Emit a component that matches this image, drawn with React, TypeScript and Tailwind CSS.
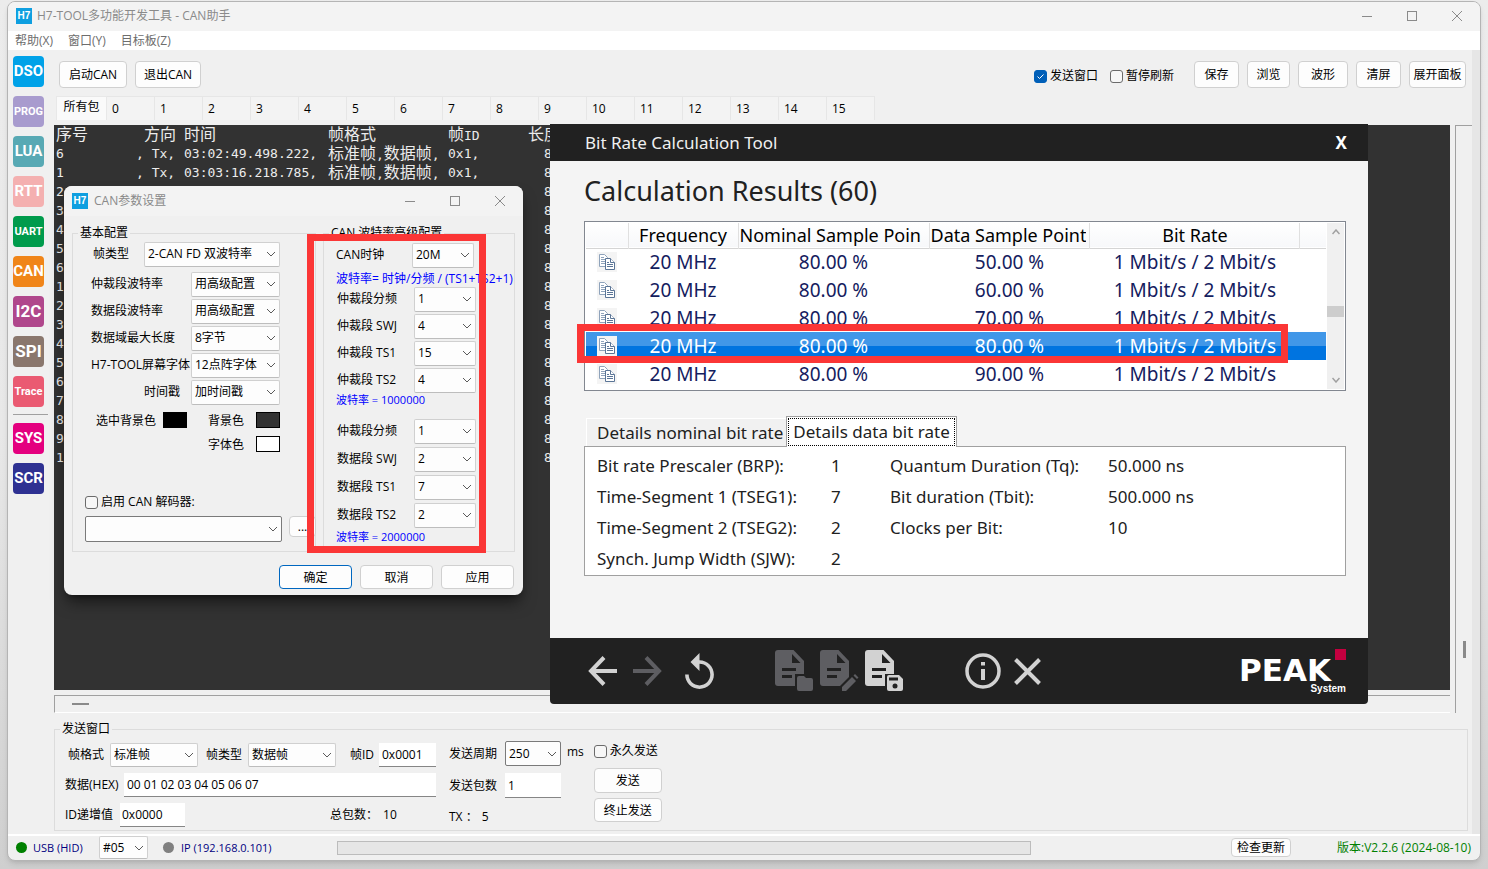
import {ReactNode, useState} from "react";

type SelectProps = {
    id: string
    value: string
    className?: string
    label?: string
}

type LogRow = {
    no: string
    time?: string
}

const modules = [
    {name: "DSO", className: "bg-[#00a2e8] text-[15px]"},
    {name: "PROG", className: "bg-[#a89bce] text-[11px]"},
    {name: "LUA", className: "bg-[#58a9b4] text-[15px]"},
    {name: "RTT", className: "bg-[#f4b0b0] text-[15px]"},
    {name: "UART", className: "bg-[#009b4c] text-[11px]"},
    {name: "CAN", className: "bg-[#f08519] text-[15px]"},
    {name: "I2C", className: "bg-[#b0478c] text-[17px]"},
    {name: "SPI", className: "bg-[#8a776d] text-[17px]"},
    {name: "Trace", className: "bg-[#ea5a72] text-[11px]"},
];

const systemModules = [
    {name: "SYS", className: "bg-[#e4007f] text-[15px]"},
    {name: "SCR", className: "bg-[#2e3192] text-[15px]"},
];

const channels = ["0", "1", "2", "3", "4", "5", "6", "7", "8", "9", "10", "11", "12", "13", "14", "15"];

const logRows: LogRow[] = [
    {no: "6", time: "03:02:49.498.222,"},
    {no: "1", time: "03:03:16.218.785,"},
    {no: "2"}, {no: "3"}, {no: "4"}, {no: "5"}, {no: "6"},
    {no: "1"}, {no: "2"}, {no: "3"}, {no: "4"}, {no: "5"},
    {no: "6"}, {no: "7"}, {no: "8"}, {no: "9"}, {no: "1"},
];

const results = ["50.00 %", "60.00 %", "70.00 %", "80.00 %", "90.00 %"];

const details = [
    ["Bit rate Prescaler (BRP):", "1", "Quantum Duration (Tq):", "50.000 ns"],
    ["Time-Segment 1 (TSEG1):", "7", "Bit duration (Tbit):", "500.000 ns"],
    ["Time-Segment 2 (TSEG2):", "2", "Clocks per Bit:", "10"],
    ["Synch. Jump Width (SJW):", "2", "", ""],
];

const basicFields = [
    {id: "arb-rate", label: "仲裁段波特率", value: "用高级配置"},
    {id: "data-rate", label: "数据段波特率", value: "用高级配置"},
    {id: "data-len", label: "数据域最大长度", value: "8字节"},
    {id: "font", label: "H7-TOOL屏幕字体", value: "12点阵字体"},
    {id: "stamp", label: "时间戳", value: "加时间戳"},
];

const arbFields = [
    {id: "arb-div", label: "仲裁段分频", value: "1"},
    {id: "arb-swj", label: "仲裁段 SWJ", value: "4"},
    {id: "arb-ts1", label: "仲裁段 TS1", value: "15"},
    {id: "arb-ts2", label: "仲裁段 TS2", value: "4"},
];

const dataFields = [
    {id: "data-div", label: "仲裁段分频", value: "1"},
    {id: "data-swj", label: "数据段 SWJ", value: "2"},
    {id: "data-ts1", label: "数据段 TS1", value: "7"},
    {id: "data-ts2", label: "数据段 TS2", value: "2"},
];

const Chevron = () => (
    <svg className="pointer-events-none absolute right-1 top-1/2 -mt-[3px] h-[6px] w-[10px]" viewBox="0 0 10 6" fill="none" stroke="#5a5a5a">
        <path d="M1 1l4 4 4-4"/>
    </svg>
);

const Select = ({id, value, className, label}: SelectProps) => (
    <span className={`relative block shrink-0 ${className ?? ""}`}>
        <select id={id} aria-label={label}
                className="block h-full w-full appearance-none rounded-xs border border-[#d0d0d0] border-b-[#bdbdbd] bg-[#fdfdfd] pl-[3px] text-black">
            <option>{value}</option>
        </select>
        <Chevron/>
    </span>
);

const Button = ({className, children}: { className: string, children: ReactNode }) => (
    <button className={`shrink-0 whitespace-nowrap rounded border bg-[#fdfdfd] pt-px text-center ${className}`}>
        {children}
    </button>
);

const CheckBox = ({label, initial}: { label: string, initial?: boolean }) => {
    const [checked, setChecked] = useState(!!initial);

    return (
        <label className="relative flex items-center gap-[3px] whitespace-nowrap">
            <input type="checkbox" checked={checked} onChange={() => setChecked(!checked)}
                   className="h-[13px] w-[13px] appearance-none rounded-[3px] border border-[#6b6b6b] bg-[#f7f7f7] checked:border-[#005fb8] checked:bg-[#005fb8]"/>
            {checked &&
                <svg className="pointer-events-none absolute left-[3px] h-[7px] w-[7px]" viewBox="0 0 7 7" fill="none" stroke="white">
                    <path d="M0.5 3.5l2 2 4-4"/>
                </svg>
            }
            {label}
        </label>
    );
};

const Logo = () => (
    <span className="flex h-4 w-4 shrink-0 items-center justify-center bg-[#0f9fe0] font-['Liberation_Sans'] text-[10px] font-bold leading-none text-white">
        H7
    </span>
);

const WindowButtons = ({className}: { className: string }) => (
    <div className={`ml-auto flex items-center gap-[23px] text-[#8a8a8a] ${className}`}>
        <button aria-label="minimize" className="flex h-[22px] w-[22px] items-center justify-center">
            <svg className="h-[10px] w-[10px]" viewBox="0 0 10 10" fill="none" stroke="currentColor"><path d="M0 5.5h10"/></svg>
        </button>
        <button aria-label="maximize" className="flex h-[22px] w-[22px] items-center justify-center">
            <svg className="h-[10px] w-[10px]" viewBox="0 0 10 10" fill="none" stroke="currentColor"><rect x="0.5" y="0.5" width="9" height="9"/></svg>
        </button>
        <button aria-label="close" className="flex h-[22px] w-[22px] items-center justify-center">
            <svg className="h-[10px] w-[10px]" viewBox="0 0 10 10" fill="none" stroke="currentColor"><path d="M0 0l10 10M10 0L0 10"/></svg>
        </button>
    </div>
);

const ModuleButton = ({name, className}: { name: string, className: string }) => (
    <button className={`flex h-[31px] w-[31px] items-center justify-center rounded font-['Roboto',sans-serif] font-bold leading-none text-white ${className}`}>
        {name}
    </button>
);

const Sidebar = () => (
    <nav className="w-[46px] shrink-0 pl-[5px] pt-[6px]">
        <div className="flex flex-col gap-[9px]">
            {modules.map((m) => <ModuleButton key={m.name} {...m}/>)}
        </div>
        <div className="mb-2 mr-[6px] mt-[7px] h-px bg-[#a0a0a0]"/>
        <div className="flex flex-col gap-[9px]">
            {systemModules.map((m) => <ModuleButton key={m.name} {...m}/>)}
        </div>
    </nav>
);

const Toolbar = () => (
    <div className="flex h-[46px] items-center gap-2 pl-[5px] pr-[6px] pt-[2px]">
        <Button className="h-[27px] w-[68px] border-[#d0d0d0]">启动CAN</Button>
        <Button className="h-[27px] w-[66px] border-[#d0d0d0]">退出CAN</Button>
        <div className="ml-auto mr-3 flex gap-3 pt-1">
            <CheckBox label="发送窗口" initial/>
            <CheckBox label="暂停刷新"/>
        </div>
        <Button className="h-[27px] w-[45px] border-[#d0d0d0]">保存</Button>
        <Button className="h-[27px] w-[43px] border-[#d0d0d0]">浏览</Button>
        <Button className="h-[27px] w-[50px] border-[#d0d0d0]">波形</Button>
        <Button className="h-[27px] w-[45px] border-[#d0d0d0]">清屏</Button>
        <Button className="h-[27px] w-[57px] border-[#d0d0d0]">展开面板</Button>
    </div>
);

const LogTable = () => (
    <table className="w-[820px] table-fixed border-collapse text-left font-['DejaVu_Sans_Mono','Noto_Sans_CJK_SC',monospace] text-[13px] leading-[19px] text-[#ececec]">
        <colgroup>
            <col className="w-[80px]"/>
            <col className="w-[48px]"/>
            <col className="w-[144px]"/>
            <col className="w-[120px]"/>
            <col className="w-[80px]"/>
            <col/>
        </colgroup>
        <thead>
        <tr className="h-[19px] text-[16px]">
            <th className="p-0 font-normal">序号</th>
            <th className="p-0 pl-2 font-normal">方向</th>
            <th className="p-0 font-normal">时间</th>
            <th className="p-0 font-normal">帧格式</th>
            <th className="p-0 font-normal">帧<span className="text-[13px] leading-none">ID</span></th>
            <th className="p-0 font-normal">长度</th>
        </tr>
        </thead>
        <tbody>
        {logRows.map((row, index) => (
            <tr className="h-[19px]" key={index}>
                <td className="p-0">{row.no}</td>
                <td className="whitespace-pre p-0">{row.time && ", Tx,"}</td>
                <td className="p-0">{row.time}</td>
                <td className="whitespace-nowrap p-0 text-[16px]">
                    {row.time &&
                        <>标准帧<span className="text-[13px] leading-none">,</span>数据帧<span className="text-[13px] leading-none">,</span></>
                    }
                </td>
                <td className="p-0">{row.time && "0x1,"}</td>
                <td className="p-0 pl-4">8</td>
            </tr>
        ))}
        </tbody>
    </table>
);

const SendPanel = () => (
    <fieldset className="mr-1 flex h-[110px] border border-[#dcdcdc] pl-2">
        <legend className="-ml-[3px] px-[2px] leading-4">发送窗口</legend>
        <div className="flex w-[373px] flex-col gap-[6px] pt-[6px]">
            <div className="flex h-6 items-center">
                <label htmlFor="frame-format" className="w-[47px] pl-[5px]">帧格式</label>
                <Select id="frame-format" value="标准帧" className="h-6 w-[88px]"/>
                <label htmlFor="frame-type" className="w-[50px] pl-2">帧类型</label>
                <Select id="frame-type" value="数据帧" className="h-6 w-[88px]"/>
                <label htmlFor="frame-id" className="ml-auto pr-[5px]">帧ID</label>
                <input id="frame-id" defaultValue="0x0001" className="h-6 w-[57px] border-b border-[#868686] bg-white pl-[3px]"/>
            </div>
            <div className="flex h-6 items-center">
                <label htmlFor="hex" className="w-[61px] whitespace-nowrap pl-[2px]">数据(HEX)</label>
                <input id="hex" defaultValue="00 01 02 03 04 05 06 07" className="h-6 min-w-0 flex-1 border-b border-[#868686] bg-white pl-[3px]"/>
            </div>
            <div className="flex h-6 items-center">
                <label htmlFor="id-inc" className="w-[57px] whitespace-nowrap pl-[2px]">ID递增值</label>
                <input id="id-inc" defaultValue="0x0000" className="h-6 w-[65px] border-b border-[#868686] bg-white pl-[2px]"/>
                <span className="ml-[145px]">总包数：</span>
                <span className="pl-[5px]">10</span>
            </div>
        </div>
        <div className="ml-[13px] flex w-[112px] flex-col gap-[7px] pt-[4px]">
            <div className="flex h-[25px] items-center justify-between">
                <label htmlFor="period">发送周期</label>
                <Select id="period" value="250" className="h-[25px] w-[56px] [&>select]:border-[#7a7a7a]"/>
            </div>
            <div className="flex h-[25px] items-center justify-between">
                <label htmlFor="packets">发送包数</label>
                <input id="packets" defaultValue="1" className="h-[25px] w-[56px] border-b border-[#868686] bg-white pl-[3px]"/>
            </div>
            <div className="flex h-6 items-center gap-1">
                <span>TX ：</span>
                <span>5</span>
            </div>
        </div>
        <span className="ml-[6px] pt-[7px]">ms</span>
        <div className="ml-[10px] flex flex-col pt-[6px]">
            <CheckBox label="永久发送"/>
            <Button className="mt-[9px] h-[25px] w-[68px] border-[#d0d0d0]">发送</Button>
            <Button className="mt-[5px] h-6 w-[68px] border-[#d0d0d0]">终止发送</Button>
        </div>
    </fieldset>
);

const StatusBar = () => (
    <footer className="flex h-[26px] items-center border-t-2 border-white pb-px pr-[9px]">
        <span className="ml-2 h-[11px] w-[11px] rounded-full bg-[#008000]"/>
        <span className="ml-[6px] w-[66px] whitespace-nowrap text-[11px] text-[#000080]">USB (HID)</span>
        <Select id="device" label="device" value="#05" className="h-[23px] w-[49px]"/>
        <span className="ml-[15px] h-[11px] w-[11px] rounded-full bg-[#808080]"/>
        <span className="ml-[7px] w-[153px] whitespace-nowrap text-[11px] text-[#000080]">IP (192.168.0.101)</span>
        <div className="ml-[3px] h-[14px] flex-1 border border-[#bcbcbc] bg-[#e6e6e6]"/>
        <Button className="ml-[200px] h-[19px] w-[60px] border-[#d0d0d0] leading-4">检查更新</Button>
        <span className="w-[180px] whitespace-nowrap text-right text-[#008000]">版本:V2.2.6 (2024-08-10)</span>
    </footer>
);

const TimingRows = ({fields, className}: { fields: typeof arbFields, className: string }) => (
    <div className={`flex flex-col ${className}`}>
        {fields.map((f) => (
            <div className="flex h-6 items-center" key={f.id}>
                <label htmlFor={f.id} className="w-[78px] whitespace-nowrap pl-px">{f.label}</label>
                <Select id={f.id} value={f.value} className="h-[25px] w-[62px]"/>
            </div>
        ))}
    </div>
);

const CanDialog = () => (
    <section className="absolute left-[64px] top-[186px] w-[459px] rounded-lg bg-[#f0f0f0] pb-[6px] shadow-lg shadow-black/50">
        <header className="flex h-[30px] items-center rounded-t-lg bg-[#f3f3f3] pl-2">
            <Logo/>
            <h2 className="pl-[6px] text-[#8a8a8a]">CAN参数设置</h2>
            <WindowButtons className="pr-3"/>
        </header>
        <div className="flex gap-[7px] px-2 pt-[9px]">
            <fieldset className="h-[327px] w-[244px] min-w-0 border border-[#dcdcdc]">
                <legend className="ml-[5px] px-[2px] leading-4">基本配置</legend>
                <div className="mt-px flex h-6 items-center pl-5">
                    <label htmlFor="can-type" className="w-[51px]">帧类型</label>
                    <Select id="can-type" value="2-CAN FD 双波特率" className="h-[25px] w-[136px]"/>
                </div>
                <div className="mt-[6px] flex w-[207px] flex-col gap-[3px]">
                    {basicFields.map((f) => (
                        <div className="flex h-6 items-center" key={f.id}>
                            <label htmlFor={f.id} className={`w-[118px] overflow-hidden whitespace-nowrap ${f.id === "stamp" ? "pl-[71px]" : "pl-[18px]"}`}>
                                {f.label}
                            </label>
                            <Select id={f.id} value={f.value} className="h-[25px] w-[89px]"/>
                        </div>
                    ))}
                </div>
                <div className="mt-2 grid w-[207px] grid-cols-[67px_45px_48px_24px] gap-y-[6px] pl-[23px]">
                    <span className="leading-[18px]">选中背景色</span>
                    <span className="h-4 w-6 border border-black bg-black"/>
                    <span className="leading-[18px]">背景色</span>
                    <span className="h-4 w-6 border border-black bg-[#323232]"/>
                    <span className="col-start-3 leading-[18px]">字体色</span>
                    <span className="h-4 w-6 border border-black bg-white"/>
                </div>
                <div className="ml-3 mt-[40px]">
                    <CheckBox label="启用 CAN 解码器:"/>
                </div>
                <div className="ml-3 mt-[6px] flex gap-[7px]">
                    <Select id="decoder" label="decoder" value="" className="h-[26px] w-[197px] [&>select]:border-[#7a7a7a]"/>
                    <Button className="h-[21px] w-[27px] border-[#d0d0d0] leading-4">...</Button>
                </div>
            </fieldset>
            <fieldset className="h-[327px] min-w-0 flex-1 border border-[#dcdcdc] pl-3">
                <legend className="-ml-[7px] px-[2px] leading-4">CAN 波特率高级配置</legend>
                <div className="mt-[2px] flex h-6 items-center">
                    <label htmlFor="clock" className="w-[76px]">CAN时钟</label>
                    <Select id="clock" value="20M" className="h-[25px] w-[62px]"/>
                </div>
                <p className="mt-[4px] whitespace-nowrap leading-4 text-[#0000ff]">波特率= 时钟/分频 / (TS1+TS2+1)</p>
                <TimingRows fields={arbFields} className="gap-[3px]"/>
                <p className="mb-[11px] text-[11px] leading-4 text-[#0000ff]">波特率 = 1000000</p>
                <TimingRows fields={dataFields} className="gap-1"/>
                <p className="mt-[2px] text-[11px] leading-4 text-[#0000ff]">波特率 = 2000000</p>
            </fieldset>
        </div>
        <div className="mt-[13px] flex justify-end gap-2 pr-[9px]">
            <Button className="h-6 w-[73px] border-[#0067c0]">确定</Button>
            <Button className="h-6 w-[73px] border-[#d0d0d0]">取消</Button>
            <Button className="h-6 w-[73px] border-[#d0d0d0]">应用</Button>
        </div>
    </section>
);

const CopyIcon = () => (
    <svg className="mx-auto block h-5 w-5 bg-[#f4f4f4]" viewBox="0 0 20 20" fill="white" stroke="#8fa3bb">
        <path d="M2.5 2.5h5l3 3v9h-8z"/>
        <path d="M4 5.5h3M4 7.5h4M4 9.5h4M4 11.5h4"/>
        <path d="M8.5 6.5h5l4 4v7h-9z" stroke="#5b7596"/>
        <path d="M13.5 6.5v4h4M10 10.5h2M10 12.5h6M10 14.5h6" stroke="#5b7596"/>
    </svg>
);

const DocIcon = ({children}: { children: ReactNode }) => (
    <svg className="h-[42px] w-[39px]" viewBox="0 0 39 42" fill="currentColor">
        <path d="M3 0h15.500l10.500 11v22a3 3 0 0 1-3 3H3a3 3 0 0 1-3-3V3a3 3 0 0 1 3-3z"/>
        <path d="M17 4v9h8.500zM7 18h14v3H7zM7 25h10v3H7z" fill="#212121"/>
        {children}
    </svg>
);

const PeakWindow = () => (
    <section className="absolute left-[550px] top-[124px] w-[818px] rounded-sm bg-[#f4f4f4] font-['Noto_Sans',sans-serif] text-[17px] text-[#212121]">
        <header className="flex h-[37px] items-center justify-between bg-[#212121] pl-[35px] pr-[21px] pt-px text-[#f0f0f0]">
            <h2>Bit Rate Calculation Tool</h2>
            <button className="font-bold text-white">X</button>
        </header>
        <div className="pb-[62px] pl-[34px] pr-[22px] pt-3">
            <h1 className="h-[48px] text-[27px] leading-9">Calculation Results (60)</h1>
            <div className="flex h-[170px] border border-[#828790] bg-white p-px">
                <table className="h-fit min-w-0 flex-1 table-fixed border-collapse text-center text-[18px] leading-[24px]">
                    <colgroup>
                        <col className="w-[42px]"/>
                        <col className="w-[110px]"/>
                        <col className="w-[191px]"/>
                        <col className="w-[160px]"/>
                        <col className="w-[210px]"/>
                        <col/>
                    </colgroup>
                    <thead>
                    <tr className="h-[25px] border-b border-[#d5d5d5] bg-linear-to-b from-white to-[#f7f8fa] text-black">
                        <th className="border-r border-[#e0e0e0] p-0"/>
                        <th className="border-r border-[#e0e0e0] p-0 font-normal">Frequency</th>
                        <th className="border-r border-[#e0e0e0] p-0 px-px text-left font-normal">
                            <div className="overflow-hidden whitespace-nowrap">Nominal Sample Poin</div>
                        </th>
                        <th className="border-r border-[#e0e0e0] p-0 px-px text-left font-normal">
                            <div className="mr-[2px] overflow-hidden whitespace-nowrap">Data Sample Point</div>
                        </th>
                        <th className="border-r border-[#e0e0e0] p-0 font-normal">Bit Rate</th>
                        <th className="p-0"/>
                    </tr>
                    </thead>
                    <tbody className="text-[19px]">
                    {results.map((point, index) => (
                        <tr key={point}
                            className={index === 3 ? "h-7 bg-linear-to-b from-[#4197e8] from-50% to-[#0074e0] to-50% text-white" : "h-7 text-[#14205e]"}>
                            <td className="p-0"><CopyIcon/></td>
                            <td className="p-0">20 MHz</td>
                            <td className="p-0">80.00 %</td>
                            <td className="p-0">{point}</td>
                            <td className="whitespace-nowrap p-0">1 Mbit/s / 2 Mbit/s</td>
                            <td className="p-0"/>
                        </tr>
                    ))}
                    </tbody>
                </table>
                <div className="ml-px flex w-[17px] shrink-0 flex-col items-center bg-[#f0f0f0] py-[6px]">
                    <svg className="h-[6px] w-2" viewBox="0 0 8 6" fill="none" stroke="#a0a0a0" strokeWidth="1.500"><path d="M0.500 5L4 1l3.500 4"/></svg>
                    <div className="mt-[71px] h-[11px] w-full bg-[#cdcdcd]"/>
                    <svg className="mt-auto h-[6px] w-2" viewBox="0 0 8 6" fill="none" stroke="#a0a0a0" strokeWidth="1.500"><path d="M0.500 1L4 5l3.500-4"/></svg>
                </div>
            </div>
            <div className="mt-[25px] flex items-end pl-[2px]">
                <button className="h-[28px] w-[200px] whitespace-nowrap border-l border-t border-white bg-[#f1f1f1] pl-[10px] text-left leading-[26px]">
                    Details nominal bit rate
                </button>
                <button className="relative -mb-px h-[31px] w-[171px] border border-b-0 border-[#a0a0a0] bg-white p-px">
                    <span className="block h-full whitespace-nowrap border border-dotted border-black leading-[26px]">Details data bit rate</span>
                </button>
            </div>
            <dl className="grid h-[130px] grid-cols-[234px_59px_218px_1fr] grid-rows-4 border border-[#a0a0a0] bg-white pb-px pl-3 pt-[3px] leading-[31px]">
                {details.flat().map((text, index) => (
                    index % 2 === 0 ? <dt key={index}>{text}</dt> : <dd key={index}>{text}</dd>
                ))}
            </dl>
        </div>
        <footer className="flex h-[66px] items-center rounded-b-sm bg-[#212121] pl-[38px] pr-[22px] text-[#d2d2d2]">
            <button aria-label="back">
                <svg className="h-[30px] w-[29px]" viewBox="0 0 29 30" fill="none" stroke="currentColor" strokeWidth="4"><path d="M29 15H3M16 1.500L3 15l13 13.500"/></svg>
            </button>
            <button aria-label="forward" className="ml-4 text-[#5e5e62]">
                <svg className="h-[30px] w-[29px]" viewBox="0 0 29 30" fill="none" stroke="currentColor" strokeWidth="4"><path d="M0 15h26M13 1.500L26 15 13 28.500"/></svg>
            </button>
            <button aria-label="reset" className="ml-[23px]">
                <svg className="h-9 w-[29px]" viewBox="4 1 16 20" fill="currentColor">
                    <path d="M12 5V1L7 6l5 5V7c3.310 0 6 2.690 6 6s-2.690 6-6 6-6-2.690-6-6H4c0 4.420 3.580 8 8 8s8-3.580 8-8-3.580-8-8-8z"/>
                </svg>
            </button>
            <button aria-label="open" className="ml-[61px] text-[#5e5e62]">
                <DocIcon>
                    <path d="M20 24h19v18H20z" fill="#212121"/>
                    <path d="M24 26h5l2 2h5a2 2 0 0 1 2 2v9a2 2 0 0 1-2 2H24a2 2 0 0 1-2-2V28a2 2 0 0 1 2-2z"/>
                </DocIcon>
            </button>
            <button aria-label="edit" className="ml-[6px] text-[#5e5e62]">
                <DocIcon>
                    <path d="M20 36L34 22l5 5v15H20z" fill="#212121"/>
                    <path d="M22 37l10-10 4 4-10 10h-4zM33.500 25.500l1.500-1.500 3.500 3.500-1.500 1.500z"/>
                </DocIcon>
            </button>
            <button aria-label="save" className="ml-[6px]">
                <DocIcon>
                    <path d="M20 24h19v18H20z" fill="#212121"/>
                    <path d="M24 25h10l4 4v10a2 2 0 0 1-2 2H24a2 2 0 0 1-2-2V27a2 2 0 0 1 2-2z"/>
                    <path d="M24 27.500h9v3h-9z" fill="#212121"/>
                    <circle cx="30" cy="36" r="2.500" fill="#212121"/>
                </DocIcon>
            </button>
            <button aria-label="info" className="ml-[61px]">
                <svg className="h-9 w-9" viewBox="0 0 36 36" fill="none" stroke="currentColor" strokeWidth="3.500">
                    <circle cx="18" cy="18" r="16"/>
                    <path d="M18 16v11M18 9v3.500" strokeWidth="4"/>
                </svg>
            </button>
            <button aria-label="cancel" className="ml-[13px]">
                <svg className="h-[27px] w-[27px]" viewBox="0 0 27 27" fill="none" stroke="currentColor" strokeWidth="4"><path d="M1.500 1.500l24 24M25.500 1.500l-24 24"/></svg>
            </button>
            <div className="ml-auto flex flex-col items-end font-bold leading-none text-white">
                <span className="h-[11px] w-[11px] bg-[#c4003f]"/>
                <span className="mr-[15px] h-[20px] font-['DejaVu_Sans',sans-serif] text-[31px] leading-[20px]">PEAK</span>
                <span className="mt-1 font-['Liberation_Sans',sans-serif] text-[10px]">System</span>
            </div>
        </footer>
    </section>
);

const App = () => (
    <div className="relative flex min-h-screen flex-col bg-linear-to-b from-[#ececec] via-[#e8e8e8] to-[#cfcfcf] px-[7px] pb-2 pt-px font-['Open_Sans','Noto_Sans_CJK_SC',sans-serif] text-[12px] leading-4 text-black">
        <main className="flex flex-1 flex-col overflow-hidden rounded-lg border border-[#b4b4b4] bg-[#f0f0f0] shadow-md">
            <header className="flex h-[29px] items-center bg-[#f3f3f3] pb-[2px] pl-2">
                <Logo/>
                <h1 className="pl-[5px] text-[#8a8a8a]">H7-TOOL多功能开发工具 - CAN助手</h1>
                <WindowButtons className="pr-3"/>
            </header>
            <nav className="flex h-[19px] items-center gap-[15px] bg-white pl-[7px] text-[#6d6d6d]">
                <button>帮助(X)</button>
                <button>窗口(Y)</button>
                <button>目标板(Z)</button>
            </nav>
            <div className="flex flex-1 border-r-8 border-[#e6e6e6]">
                <Sidebar/>
                <div className="flex min-w-0 flex-1 flex-col">
                    <Toolbar/>
                    <div className="flex h-6 pl-[2px]">
                        <button className="w-[51px] border border-b-0 border-[#e8e8e8] bg-[#fafafa] pb-1">所有包</button>
                        {channels.map((c) => (
                            <button key={c} className="w-12 border-r border-t border-[#e6e6e6] bg-[#f3f3f3] pl-[5px] text-left">{c}</button>
                        ))}
                    </div>
                    <div className="mt-[5px] flex flex-1">
                        <div className="flex min-w-0 flex-1 flex-col">
                            <div className="flex-1 overflow-hidden bg-[#323232] pl-[2px]">
                                <LogTable/>
                            </div>
                            <div className="mt-[5px] flex h-[18px] items-center border-b border-l border-t border-[#a0a0a0] border-b-white pl-[17px]">
                                <span className="h-[2px] w-[17px] bg-[#8a8a8a]"/>
                            </div>
                        </div>
                        <div className="ml-[5px] flex w-[17px] items-end justify-center border-l border-t border-[#a0a0a0] pb-[55px]">
                            <span className="h-[17px] w-[3px] bg-[#8a8a8a]"/>
                        </div>
                    </div>
                    <div className="pb-[3px] pt-2">
                        <SendPanel/>
                    </div>
                </div>
            </div>
            <StatusBar/>
        </main>
        <CanDialog/>
        <PeakWindow/>
        {/* highlight frames */}
        <div className="pointer-events-none absolute left-[307px] top-[234px] h-[319px] w-[179px] border-[7px] border-[#fb3636]"/>
        <div className="pointer-events-none absolute left-[577px] top-[324px] h-[39px] w-[711px] border-[7px] border-[#fb3636]"/>
    </div>
);

export default App;
